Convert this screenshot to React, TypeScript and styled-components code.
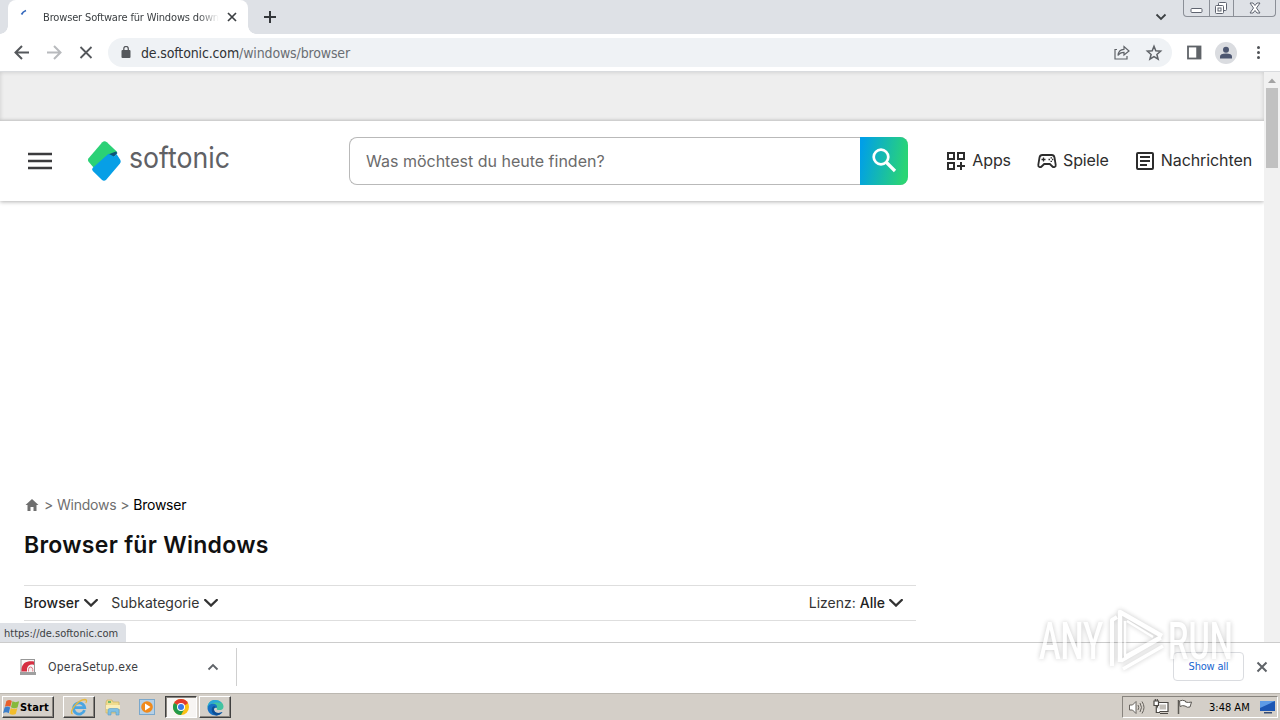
import type { ReactNode } from 'react';
import styled, { createGlobalStyle, css } from 'styled-components';

const GlobalStyle = createGlobalStyle`
  * {
    box-sizing: border-box;
  }
  body {
    margin: 0;
    background: #fff;
    overflow: hidden;
  }
  svg {
    display: block;
    flex: none;
  }
`;

const Screen = styled.div`
  position: relative;
  display: flex;
  flex-direction: column;
  width: 1280px;
  height: 720px;
  overflow: hidden;
  background: #fff;
  font-family: Inter, sans-serif;
`;

const Label = styled.span<{ $spacing?: number }>`
  white-space: nowrap;
  letter-spacing: ${({ $spacing }) => $spacing ?? 0}px;
`;

const SystemLabel = styled(Label)<{ $size?: number; $color?: string }>`
  font-family: 'DejaVu Sans Condensed', 'DejaVu Sans', sans-serif;
  font-stretch: condensed;
  font-size: ${({ $size }) => $size ?? 11}px;
  color: ${({ $color }) => $color ?? '#3c4043'};
`;

/* browser tabs */
const TabStrip = styled.div`
  display: flex;
  height: 34px;
  padding-left: 8px;
  background: #dee1e6;
`;

const Tab = styled.div`
  position: relative;
  display: flex;
  align-items: center;
  width: 240px;
  padding: 0 10px 0 12px;
  background: #fff;
  border-radius: 8px 8px 0 0;
  &::before,
  &::after {
    content: '';
    position: absolute;
    bottom: 0;
    width: 8px;
    height: 8px;
  }
  &::before {
    left: -8px;
    background: radial-gradient(circle at 0 0, transparent 7.5px, #fff 8px);
  }
  &::after {
    right: -8px;
    background: radial-gradient(circle at 100% 0, transparent 7.5px, #fff 8px);
  }
`;

const TabTitle = styled.div`
  width: 176px;
  margin: 0 8px 0 7px;
  padding-top: 1px;
  overflow: hidden;
  line-height: 16px;
  display: flex;
  mask-image: linear-gradient(to right, #000 155px, transparent 176px);
`;

const NewTab = styled.div`
  display: flex;
  align-items: center;
  padding-left: 16px;
`;

const TabMenu = styled.div`
  display: flex;
  align-items: center;
  margin-left: auto;
  padding-right: 16px;
`;

const WindowButtons = styled.div`
  display: flex;
  height: 17px;
  width: 93px;
  margin-right: 4px;
  border: 1px solid #8b8f97;
  border-top: none;
  border-radius: 0 0 4px 4px;
`;

const WindowButton = styled.div<{ $width: number }>`
  display: flex;
  align-items: center;
  justify-content: center;
  width: ${({ $width }) => $width}px;
  & + & {
    border-left: 1px solid #8b8f97;
  }
`;

/* address bar */
const Toolbar = styled.div`
  display: flex;
  align-items: center;
  height: 38px;
  padding-left: 13px;
  border-bottom: 1px solid #d9dbde;
`;

const NavIcons = styled.div`
  display: flex;
  gap: 14px;
`;

const AddressBar = styled.div`
  display: flex;
  align-items: center;
  width: 1064px;
  height: 29px;
  margin-left: 13px;
  padding: 0 9px 0 12px;
  background: #eff2f5;
  border-radius: 15px;
`;

const Url = styled.div`
  flex: 1;
  display: flex;
  margin-left: 9px;
`;

const AddressIcons = styled.div`
  display: flex;
  gap: 14px;
`;

const ProfileIcons = styled.div`
  display: flex;
  align-items: center;
  margin-left: 13px;
`;

const Avatar = styled.div`
  display: flex;
  align-items: center;
  justify-content: center;
  width: 22px;
  height: 22px;
  margin: 0 12px;
  border-radius: 50%;
  background: #dadce0;
`;

/* web page */
const Viewport = styled.div`
  position: relative;
  display: flex;
  height: 570px;
`;

const Page = styled.div`
  width: 1264px;
`;

const AdBanner = styled.div`
  height: 49px;
  background: #eee;
  box-shadow: inset 0 0 4px rgba(0, 0, 0, 0.16);
`;

const Header = styled.header`
  display: flex;
  align-items: center;
  height: 80px;
  padding: 0 12px 0 24px;
  background: #fff;
  box-shadow: 0 1px 4px rgba(0, 0, 0, 0.3);
`;

const Logo = styled.div`
  margin-left: 24px;
`;

const Search = styled.div`
  display: flex;
  align-items: center;
  width: 559px;
  height: 48px;
  margin-left: 109px;
  padding-left: 16px;
  border: 1px solid #b9b9b9;
  border-right: none;
  border-radius: 8px;
  color: #6b6b6b;
  font-size: 16px;
`;

const SearchButton = styled.div`
  display: flex;
  align-items: center;
  justify-content: center;
  width: 48px;
  height: 48px;
  margin-left: auto;
  border-radius: 0 8px 8px 0;
  background: linear-gradient(100deg, #009fe8 5%, #2bd574 90%);
`;

const Nav = styled.nav`
  display: flex;
  gap: 24px;
  margin-left: auto;
`;

const NavItem = styled.div`
  display: flex;
  align-items: center;
  gap: 4px;
  color: #2d2d2d;
  font-size: 16px;
  line-height: 24px;
`;

const NavLabel = styled(Label)`
  padding-bottom: 2px;
  letter-spacing: -0.1px;
`;

const Content = styled.main`
  width: 916px;
  padding: 296px 0 0 24px;
`;

const Breadcrumb = styled.div`
  display: flex;
  align-items: center;
  height: 16px;
  line-height: 16px;
  font-size: 14px;
  color: #6f6f6f;
`;

const Crumb = styled(Label)<{ $current?: boolean }>`
  margin-left: 4px;
  letter-spacing: -0.25px;
  color: ${({ $current }) => ($current ? '#000' : 'inherit')};
`;

const Title = styled.h1`
  margin: 18px 0 26px;
  font-size: 23px;
  line-height: 28px;
  font-weight: 600;
  color: #111;
`;

const Filters = styled.div`
  display: flex;
  align-items: center;
  height: 36px;
  padding-right: 13px;
  border-top: 1px solid #dedede;
  border-bottom: 1px solid #dedede;
  font-size: 14px;
  color: #333;
`;

const Filter = styled.div<{ $right?: boolean }>`
  display: flex;
  align-items: center;
  gap: 5px;
  margin-right: 13px;
  ${Label} {
    padding-bottom: 2px;
  }
  ${({ $right }) =>
    $right &&
    css`
      gap: 4px;
      margin-left: auto;
      margin-right: 0;
    `}
`;

const Strong = styled(Label)`
  font-weight: 500;
  padding-bottom: 2px;
  color: #222;
`;

const Scrollbar = styled.div`
  display: flex;
  flex-direction: column;
  align-items: center;
  width: 16px;
  background: #f1f1f1;
`;

const Thumb = styled.div`
  width: 12px;
  height: 80px;
  background: #c1c1c1;
`;

const StatusBubble = styled.div`
  position: absolute;
  left: 0;
  bottom: 0;
  display: flex;
  align-items: center;
  width: 126px;
  height: 19px;
  padding: 1px 0 0 4px;
  background: #dee1e6;
  border-radius: 0 4px 0 0;
`;

/* downloads */
const DownloadShelf = styled.div`
  display: flex;
  align-items: center;
  height: 51px;
  padding: 0 12px 2px 20px;
  border-top: 1px solid #ccc;
  background: #fff;
`;

const Download = styled.div`
  display: flex;
  align-items: center;
  width: 217px;
  height: 38px;
  padding-right: 17px;
  border-right: 1px solid #cfcfcf;
`;

const FileName = styled(SystemLabel)`
  flex: 1;
  margin-left: 12px;
`;

const ShowAll = styled.div`
  display: flex;
  align-items: center;
  justify-content: center;
  width: 71px;
  height: 29px;
  margin: 0 12px 1px auto;
  padding-bottom: 1px;
  border: 1px solid #dadce0;
  border-radius: 4px;
`;

/* windows taskbar */
const Taskbar = styled.div`
  display: flex;
  align-items: center;
  height: 27px;
  padding: 0 2px;
  background: #d4cfc8;
  border-top: 1px solid #bcb8b1;
`;

const TaskButton = styled.div<{ $width: number; $flat?: boolean; $active?: boolean }>`
  display: flex;
  align-items: center;
  justify-content: center;
  width: ${({ $width }) => $width}px;
  height: 22px;
  ${({ $flat }) =>
    !$flat &&
    css`
      border: 1px solid;
      border-color: #fff #404040 #404040 #fff;
      box-shadow: inset -1px -1px 0 #88847e;
    `}
  ${({ $active }) =>
    $active &&
    css`
      margin-right: 2px;
      background: #f7f5f3;
      border-color: #404040 #fff #fff #404040;
      box-shadow: inset 1px 1px 0 #88847e;
    `}
`;

const StartButton = styled(TaskButton)`
  justify-content: flex-start;
  margin-right: 9px;
`;

const StartText = styled(SystemLabel)`
  font-weight: 700;
`;

const Tray = styled.div`
  display: flex;
  align-items: center;
  width: 156px;
  height: 22px;
  margin-left: auto;
  padding-left: 5px;
  border: 1px solid;
  border-color: #88847e #fff #fff #88847e;
`;

const TrayIcons = styled.div`
  display: flex;
  gap: 8px;
  margin-right: 16px;
`;

const DesktopButton = styled.div`
  margin-left: 10px;
`;

const Watermark = styled.svg`
  position: absolute;
  left: 1030px;
  top: 600px;
`;

type IconProps = {
  size?: number;
  color?: string;
  width?: number;
  children: ReactNode;
};

const LineIcon = ({ size = 18, color = '#5f6368', width = 2, children }: IconProps) => (
  <svg
    width={size}
    height={size}
    viewBox={`0 0 ${size} ${size}`}
    fill="none"
    stroke={color}
    strokeWidth={width}
  >
    {children}
  </svg>
);

const Chevron = () => (
  <svg width="14" height="8" viewBox="0 0 14 8" fill="none" stroke="#333" strokeWidth="2.4">
    <path d="M1.200 1L7 6.500 12.800 1" strokeLinecap="round" />
  </svg>
);

const SoftonicLogo = () => (
  <svg width="160" height="60" viewBox="0 0 160 60">
    <path
      d="M22.300 11.200q2.200-1.800 4.600 0L37 20.800 33 26 14 37 8.600 30.800q-1.500-1.800 0-3.600z"
      fill="#2bd176"
    />
    <path d="M28 23.500L36 20.500 37.500 22 32 28z" fill="#0b5478" />
    <path
      d="M12.800 36.800L28.500 22.800 34 25.500 36.500 23 40.400 29q1 2-.6 3.800L26.200 48.800q-2.200 1.800-4.400 0L12.800 40q-1.500-1.600 0-3.200z"
      fill="#079fe6"
    />
    <text
      x="49"
      y="36.500"
      fontFamily="Inter, sans-serif"
      fontSize="29.500"
      fontWeight="400"
      fill="#606165"
      textLength="101"
      lengthAdjust="spacingAndGlyphs"
    >
      softonic
    </text>
  </svg>
);

const AppsIcon = () => (
  <LineIcon size={24} color="#2d2d2d">
    <path d="M4 4h6v6H4zM14 4h6v6h-6zM4 14h6v6H4zM17 13v8M13 17h8" />
  </LineIcon>
);

const GameIcon = () => (
  <LineIcon size={24} color="#2d2d2d" width={1.8}>
    <path d="M7.300 6h9.400c1.500 0 2.500 1 2.800 2.500l1.200 7.300c.3 2.300-2 3-3.300 1.700L14.800 15H9.200l-2.600 2.500c-1.300 1.300-3.600.6-3.300-1.700l1.200-7.300C4.800 7 5.800 6 7.300 6z" />
    <path d="M8.500 8.500v4M6.500 10.500h4" strokeWidth="1.300" />
    <path d="M13.500 10.500H15M15.500 8.800H17M15.500 12.300H17M17 10.500h1.300" strokeWidth="1.300" />
  </LineIcon>
);

const NewsIcon = () => (
  <LineIcon size={24} color="#2d2d2d">
    <rect x="4" y="4" width="16" height="16" rx="1" />
    <path d="M7 8h10M7 12h10M7 16h7" />
  </LineIcon>
);

const WindowsFlag = () => (
  <svg width="17" height="17" viewBox="0 0 16 16">
    <path d="M3.200 1.800Q6 .3 8.300 1.800L6.900 7.300Q4.500 5.800 1.800 7.300z" fill="#e8602c" />
    <path d="M8.900 2.200q2.700 1.500 6.300 0L13.700 8q-3.200 1.500-6.200-.2z" fill="#86b93c" />
    <path d="M1.500 7.900q2.700-1.500 5.200 0L5.400 13.300Q3 11.800.1 13.300z" fill="#3d7fca" />
    <path d="M7.300 8.400q2.800 1.600 6.200.2L12 14.200q-3.300 1.200-6-.4z" fill="#f2bd2c" />
  </svg>
);

const ExplorerIcon = () => (
  <svg width="20" height="20" viewBox="0 0 20 20" fill="none">
    <path
      d="M15.500 13.200A5.600 5.600 0 1 1 15.700 10.700H6"
      stroke="#4aa5e2"
      strokeWidth="2.800"
    />
    <path d="M3.500 17C-.5 15.500 8 3 16 2.500c2 0 1.800 2 .8 3.500" stroke="#e7b83e" strokeWidth="1.300" />
  </svg>
);

const FolderIcon = () => (
  <svg width="18" height="18" viewBox="0 0 18 18">
    <path d="M2 4l1-2h5l1 2h6v11H2z" fill="#f0dc8e" stroke="#cdb25e" strokeWidth=".7" />
    <path d="M4 3h3v2H4z" fill="#74b96a" />
    <path d="M2 7h14v4H2z" fill="#faeeb9" />
    <path d="M4 17v-5q0-1.500 2-1.500h7q2 0 2 1.500v5h-3v-3H7v3z" fill="#7fc0e4" stroke="#5a9bc4" strokeWidth=".6" />
  </svg>
);

const PlayerIcon = () => (
  <svg width="18" height="16" viewBox="0 0 18 16">
    <rect x=".5" y=".5" width="15" height="15" fill="#b5d0e6" stroke="#7aa8cc" />
    <circle cx="8" cy="8" r="5.800" fill="#f08a1c" />
    <path d="M6 4.500L11.500 8 6 11.500z" fill="#fff" />
  </svg>
);

const ChromeIcon = () => (
  <svg width="16" height="16" viewBox="0 0 16 16">
    <circle cx="8" cy="8" r="8" fill="#fbc116" />
    <path d="M8 8L1.070 4A8 8 0 0 1 14.930 4z" fill="#e33b2e" />
    <path d="M8 8L1.070 4A8 8 0 0 0 8 16L11.400 10z" fill="#229a4b" />
    <path d="M8 4.500h6.900L8 8z" fill="#e33b2e" />
    <circle cx="8" cy="8" r="4" fill="#fff" />
    <circle cx="8" cy="8" r="3" fill="#3979e8" />
  </svg>
);

const EdgeIcon = () => (
  <svg width="17" height="17" viewBox="0 0 17 17">
    <path d="M.5 8.500C.5 4 4 1 8 1c5 0 8.500 3 8.500 6.500 0 3-2.500 4-5.500 3.500-1.500-.3-1.500-1-1-2z" fill="#43c3a0" />
    <path d="M.5 8.500C.8 3.500 4 1 8 1c3 0 5 1 6.500 3C10 2.500 3 4 .5 8.500z" fill="#2ba7d8" />
    <path d="M.5 9C1 6 3.500 4.800 6 4.800c3 0 4.500 1.800 4 4.200-1-1-3-.5-3 1.500 0 3 3.500 4.500 8.500 2.500-1.500 2.500-4 3.500-6.500 3.500C4 16.500.5 13 .5 9z" fill="#1670c4" />
    <path d="M5.500 8C3.500 11 5.500 16 9.500 16.400 12 16 14 15 15.500 13 10.500 15 7 13.500 7 10.500c0-1.500 1-2.300 2-2.200-1-1.300-2.700-1.300-3.500-.3z" fill="#0d4f96" />
  </svg>
);

const OperaIcon = () => (
  <svg width="16" height="16" viewBox="0 0 16 16">
    <rect x="1" y=".5" width="13.500" height="13" fill="#f7f7f7" stroke="#979797" />
    <path d="M0 13h16v3H0z" fill="#9f9f9f" />
    <path d="M1.500 12.500V10C2.500 4 6 1.800 14 2.500V6C10.500 4.800 8 6.500 7 9.500v3z" fill="#d62f42" />
    <path d="M8.500 12.500v-2Q8.500 8 10.500 8t2.300 2.500v2" fill="#f7eeee" stroke="#db5a68" strokeWidth=".8" />
  </svg>
);

const SpeakerIcon = () => (
  <LineIcon size={17} color="#68645f" width={1}>
    <path d="M1.500 6h3L8 2.500v12L4.500 11h-3z" fill="#fff" />
    <path d="M10 6q1.500 2.500 0 5M12 4q3 4.500 0 9M14 2.500q4 6 0 12" />
  </LineIcon>
);

const NetworkIcon = () => (
  <LineIcon size={16} color="#4c4945" width={1.2}>
    <path d="M4.500 3.500h10.500v9H4.500zM7 14.500h8" fill="#fff" />
    <path d="M6.500 5.500h6.500v5H6.500z" fill="#c2beb8" stroke="none" />
    <path d="M1 2h4.500v4.500H1zM2.300 0v2M4.300 0v2M3.300 6.500v7H7" fill="#fff" />
  </LineIcon>
);

const FlagIcon = () => (
  <LineIcon size={16} color="#5d5a55" width={1}>
    <path d="M2.500 2q3-1.500 6 0v1q3 1 6 0l-1.500 5q-2.500 1-5-1-2.500-1-5 .5z" fill="#fff" />
    <path d="M1.500 1v14" strokeWidth="1.500" />
  </LineIcon>
);

const DesktopIcon = () => (
  <svg width="16" height="14" viewBox="0 0 16 14">
    <path d="M0 1h15v10H0z" fill="#1c56b4" />
    <path d="M0 1h15L0 8z" fill="#5d9ae6" />
    <path d="M4 12h8v1.500H4z" fill="#354b73" />
  </svg>
);

const WatermarkText = styled.text`
  font-family: Roboto, sans-serif;
  font-size: 52px;
  font-weight: 500;
`;

const Glow = styled.g`
  opacity: 0.6;
  fill: #fff;
  filter: drop-shadow(0 0 2.5px rgba(0, 0, 0, 0.36));
`;

const AnyRun = () => (
  <Watermark width="230" height="84" viewBox="0 0 230 84">
    <Glow>
      <WatermarkText x="9" y="59" textLength="64" lengthAdjust="spacingAndGlyphs">
        ANY
      </WatermarkText>
      <g fill="none" stroke="#fff" strokeLinejoin="round">
        <path d="M82 66V20l5-3" strokeWidth="4" />
        <path d="M90 62V12L132 36" strokeWidth="4.500" />
        <path d="M95 21v35l36-20M97 21l26 16" strokeWidth="2.500" />
        <path d="M91 61l40-23M93 69l40-23" strokeWidth="3.500" />
      </g>
      <WatermarkText x="138" y="59" textLength="65" lengthAdjust="spacingAndGlyphs">
        RUN
      </WatermarkText>
    </Glow>
  </Watermark>
);

const App = () => (
  <>
    <GlobalStyle />
    <Screen>
      <TabStrip>
        <Tab>
          <LineIcon size={16} color="#3569bd" width={1.8}>
            <path d="M1.500 5.500Q3 2.500 6 1.500" />
          </LineIcon>
          <TabTitle>
            <SystemLabel $spacing={-0.15}>Browser Software für Windows down</SystemLabel>
          </TabTitle>
          <LineIcon size={10} color="#3c4043" width={1.7}>
            <path d="M1 1l8 8M9 1L1 9" />
          </LineIcon>
        </Tab>
        <NewTab>
          <LineIcon size={12} color="#34373b">
            <path d="M6 0v12M0 6h12" />
          </LineIcon>
        </NewTab>
        <TabMenu>
          <LineIcon size={12} color="#3c4043" width={1.8}>
            <path d="M1.500 3.500L6 8l4.500-4.500" />
          </LineIcon>
        </TabMenu>
        <WindowButtons>
          <WindowButton $width={25}>
            <LineIcon size={13} color="#5f6470" width={1}>
              <rect x="1" y="6.500" width="11" height="4" rx="1" fill="#fff" />
            </LineIcon>
          </WindowButton>
          <WindowButton $width={25}>
            <LineIcon size={13} color="#5f6470" width={1}>
              <rect x="3.500" y=".5" width="8" height="8" rx="1" fill="#fff" />
              <rect x=".5" y="3.500" width="8" height="8" rx="1" fill="#fff" />
              <rect x="3" y="6" width="3" height="3" />
            </LineIcon>
          </WindowButton>
          <WindowButton $width={42}>
            <LineIcon size={12} color="#5f6470" width={1}>
              <path d="M1 1h3l2 2.500L8 1h3L7.500 6l3.500 5H8L6 8.500 4 11H1l3.500-5z" fill="#fff" />
            </LineIcon>
          </WindowButton>
        </WindowButtons>
      </TabStrip>

      <Toolbar>
        <NavIcons>
          <LineIcon color="#55585c">
            <path d="M16 8.500H3M9 2L2.500 8.500 9 15" />
          </LineIcon>
          <LineIcon color="#b8babd">
            <path d="M2 8.500h13M9 2l6.500 6.500L9 15" />
          </LineIcon>
          <LineIcon color="#55585c" width={1.8}>
            <path d="M3.500 3l11 11M14.500 3l-11 11" />
          </LineIcon>
        </NavIcons>
        <AddressBar>
          <svg width="12" height="13" viewBox="0 0 12 13">
            <rect x="1.500" y="4" width="9" height="8" rx="1" fill="#55585c" />
            <path d="M3.800 5V2.700a2.250 2.250 0 0 1 4.500 0V5" fill="none" stroke="#55585c" strokeWidth="1.300" />
          </svg>
          <Url>
            <SystemLabel $size={14} $spacing={-0.14} $color="#303236">
              de.softonic.com
            </SystemLabel>
            <SystemLabel $size={14} $spacing={-0.14} $color="#6a6e73">
              /windows/browser
            </SystemLabel>
          </Url>
          <AddressIcons>
            <LineIcon width={1.2}>
              <path d="M4 5.500H2V15h12v-3" />
              <path d="M5 11.500c.3-4 2.200-6 6-6.200V2.500l5 4.500-5 4V8.300C8.500 8.300 6.500 9 5 11.500z" />
            </LineIcon>
            <LineIcon width={1.5}>
              <path d="M9 2.200l1.800 4.600 4.800.4-3.700 3.200 1.200 4.800L9 12.600l-4.100 2.600 1.200-4.800-3.700-3.200 4.800-.4z" />
            </LineIcon>
          </AddressIcons>
        </AddressBar>
        <ProfileIcons>
          <LineIcon width={1.8}>
            <rect x="3" y="2.500" width="12.500" height="12" />
            <path d="M13.500 2.500v12" strokeWidth="4.500" />
          </LineIcon>
          <Avatar>
            <svg width="14" height="14" viewBox="0 0 14 14" fill="#4c5670">
              <circle cx="7" cy="3.800" r="3" />
              <path d="M1 12.500v-2q0-3 6-3t6 3v2z" />
            </svg>
          </Avatar>
          <svg width="18" height="18" viewBox="0 0 18 18" fill="#4f5256">
            <circle cx="9.500" cy="3.500" r="1.500" />
            <circle cx="9.500" cy="8.500" r="1.500" />
            <circle cx="9.500" cy="13.500" r="1.500" />
          </svg>
        </ProfileIcons>
      </Toolbar>

      <Viewport>
        <Page>
          <AdBanner />
          <Header>
            <LineIcon size={32} color="#3b3b3d" width={2.5}>
              <path d="M4 9h24M4 16h24M4 23h24" />
            </LineIcon>
            <Logo>
              <SoftonicLogo />
            </Logo>
            <Search>
              <Label>Was möchtest du heute finden?</Label>
              <SearchButton>
                <LineIcon size={28} color="#fff" width={2.7}>
                  <circle cx="11" cy="10" r="7.300" />
                  <path d="M16.500 15.500L25 24" strokeWidth="3.200" />
                </LineIcon>
              </SearchButton>
            </Search>
            <Nav>
              <NavItem>
                <AppsIcon />
                <NavLabel>Apps</NavLabel>
              </NavItem>
              <NavItem>
                <GameIcon />
                <NavLabel>Spiele</NavLabel>
              </NavItem>
              <NavItem>
                <NewsIcon />
                <NavLabel>Nachrichten</NavLabel>
              </NavItem>
            </Nav>
          </Header>
          <Content>
            <Breadcrumb>
              <svg width="16" height="16" viewBox="0 0 16 16" fill="#6f6f6f">
                <path d="M8 2L1.500 8H3.500v6H6.500V10h3v4h3V8h2z" />
              </svg>
              <Crumb>&gt;</Crumb>
              <Crumb>Windows</Crumb>
              <Crumb>&gt;</Crumb>
              <Crumb $current>Browser</Crumb>
            </Breadcrumb>
            <Title>
              <Label $spacing={0.28}>Browser für Windows</Label>
            </Title>
            <Filters>
              <Filter>
                <Strong>Browser</Strong>
                <Chevron />
              </Filter>
              <Filter>
                <Label>Subkategorie</Label>
                <Chevron />
              </Filter>
              <Filter $right>
                <Label>Lizenz:</Label>
                <Strong>Alle</Strong>
                <Chevron />
              </Filter>
            </Filters>
          </Content>
        </Page>
        <Scrollbar>
          <svg width="16" height="16" viewBox="0 0 16 16">
            <path d="M4 11l4-4.500 4 4.500z" fill="#a3a3a3" />
          </svg>
          <Thumb />
        </Scrollbar>
        <StatusBubble>
          <SystemLabel>https://de.softonic.com</SystemLabel>
        </StatusBubble>
      </Viewport>

      <DownloadShelf>
        <Download>
          <OperaIcon />
          <FileName $size={12} $spacing={0.22}>
            OperaSetup.exe
          </FileName>
          <LineIcon size={12} width={1.8}>
            <path d="M1.500 8.500L6 4l4.500 4.500" />
          </LineIcon>
        </Download>
        <ShowAll>
          <SystemLabel $color="#1a66cf" $spacing={-0.2}>
            Show all
          </SystemLabel>
        </ShowAll>
        <LineIcon size={12}>
          <path d="M1.500 1.500l9 9M10.500 1.500l-9 9" />
        </LineIcon>
      </DownloadShelf>

      <Taskbar>
        <StartButton $width={52}>
          <WindowsFlag />
          <StartText $color="#000" $spacing={0.15}>
            Start
          </StartText>
        </StartButton>
        <TaskButton $width={32}>
          <ExplorerIcon />
        </TaskButton>
        <TaskButton $width={36} $flat>
          <FolderIcon />
        </TaskButton>
        <TaskButton $width={34} $flat>
          <PlayerIcon />
        </TaskButton>
        <TaskButton $width={32} $active>
          <ChromeIcon />
        </TaskButton>
        <TaskButton $width={32}>
          <EdgeIcon />
        </TaskButton>
        <Tray>
          <TrayIcons>
            <SpeakerIcon />
            <NetworkIcon />
            <FlagIcon />
          </TrayIcons>
          <SystemLabel $color="#000">3:48 AM</SystemLabel>
          <DesktopButton>
            <DesktopIcon />
          </DesktopButton>
        </Tray>
      </Taskbar>
      <AnyRun />
    </Screen>
  </>
);

export default App;
